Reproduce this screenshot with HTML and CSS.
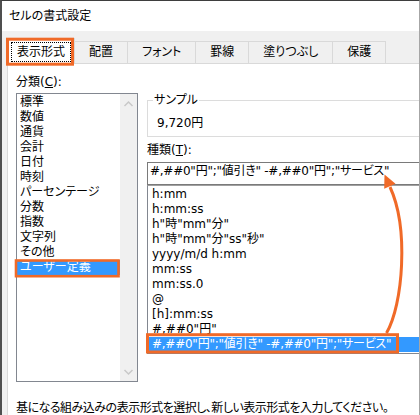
FILE: index.html
```html
<!DOCTYPE html>
<html lang="ja">
<head>
<meta charset="utf-8">
<link rel="stylesheet" href="styles.css">
</head>
<body>
<div class="window">
  <div class="titlebar">セルの書式設定</div>
  <div class="tabs">
    <div class="tab active"><span class="focus">表示形式</span></div>
    <div class="tab">配置</div>
    <div class="tab">フォント</div>
    <div class="tab">罫線</div>
    <div class="tab">塗りつぶし</div>
    <div class="tab">保護</div>
  </div>
  <div class="content">
    <div class="panel">
      <div class="row">
        <div class="leftcol">
          <div class="label">分類(<u>C</u>):</div>
          <div class="catbox">
            <div class="catitems">
              <div class="item">標準</div>
              <div class="item">数値</div>
              <div class="item">通貨</div>
              <div class="item">会計</div>
              <div class="item">日付</div>
              <div class="item">時刻</div>
              <div class="item">パーセンテージ</div>
              <div class="item">分数</div>
              <div class="item">指数</div>
              <div class="item">文字列</div>
              <div class="item">その他</div>
              <div class="item selected">ユーザー定義</div>
            </div>
            <div class="scrollbar">
              <svg class="sbtn" width="17" height="17" viewBox="0 0 17 17"><path d="M4.5 12 L8.5 8 L12.5 12" fill="none" stroke="#c8c8c8" stroke-width="1.5"/></svg>
              <svg class="sbtn" width="17" height="17" viewBox="0 0 17 17"><path d="M4.5 6 L8.5 10 L12.5 6" fill="none" stroke="#c8c8c8" stroke-width="1.5"/></svg>
            </div>
          </div>
        </div>
        <div class="rightcol">
          <fieldset class="sample">
            <legend>サンプル</legend>
            <div class="sampleval">9,720円</div>
          </fieldset>
          <div class="label typelabel">種類(<u>T</u>):</div>
          <div class="textbox long">#,##0"円";"値引き" -#,##0"円";"サービス"</div>
          <div class="fmtbox">
            <div class="fitem">h:mm</div>
            <div class="fitem">h:mm:ss</div>
            <div class="fitem">h"時"mm"分"</div>
            <div class="fitem">h"時"mm"分"ss"秒"</div>
            <div class="fitem">yyyy/m/d h:mm</div>
            <div class="fitem">mm:ss</div>
            <div class="fitem">mm:ss.0</div>
            <div class="fitem">@</div>
            <div class="fitem">[h]:mm:ss</div>
            <div class="fitem">#,##0"円"</div>
            <div class="fitem selected long">#,##0"円";"値引き" -#,##0"円";"サービス"</div>
          </div>
        </div>
      </div>
      <div class="hint">基になる組み込みの表示形式を選択し、新しい表示形式を入力してください。</div>
    </div>
  </div>
  <svg class="overlay" width="420" height="415" viewBox="0 0 420 415">
    <rect x="7.5" y="39.2" width="65" height="25" fill="none" stroke="#f06a28" stroke-width="3"/>
    <rect x="16" y="260.5" width="102.5" height="15.7" fill="none" stroke="#f06a28" stroke-width="2.6"/>
    <rect x="147.5" y="334.7" width="250" height="17.3" fill="none" stroke="#f06a28" stroke-width="3"/>
    <path d="M386.5 333 C403 305 409 228 390 187" fill="none" stroke="#f06a28" stroke-width="3"/>
    <polygon points="384.5,174.5 395.5,183.8 384.2,188.8" fill="#f06a28"/>
  </svg>
</div>
</body>
</html>
```
FILE: styles.css
```css
html, body {
  margin: 0;
  padding: 0;
}
body {
  font-family: "DejaVu Sans", "Noto Sans CJK JP", sans-serif;
  font-size: 12px;
  line-height: 15px;
  color: #000;
  font-feature-settings: "palt";
  background: #fff;
}
.window {
  position: relative;
  width: 420px;
  height: 415px;
  box-sizing: border-box;
  border-top: 1px solid #3e3e3e;
  border-left: 2px solid #4f4f4f;
  border-right: 1px solid #a6a6a6;
  background: #f0f0f0;
  overflow: hidden;
}
.titlebar {
  height: 30px;
  line-height: 30px;
  background: #fff;
  padding-left: 7px;
}
.tabs {
  display: flex;
  align-items: flex-end;
  height: 32px;
  padding-left: 5px;
}
.tab {
  height: 22px;
  box-sizing: border-box;
  border: 1px solid #d9d9d9;
  border-bottom: none;
  background: #f0f0f0;
  padding: 0 14px;
  line-height: 21px;
  margin-right: -1px;
}
.tab.active {
  position: relative;
  z-index: 1;
  height: 26px;
  margin-bottom: -1px;
  background: #fff;
  padding: 3px 3px 0 3px;
  line-height: 18px;
}
.focus {
  display: block;
  border: 1px dotted #000;
  padding: 0 5px 0 5px;
  height: 18px;
}
.content {
  padding-left: 5px;
}
.panel {
  background: #fff;
  border: 1px solid #d9d9d9;
  border-right: none;
  height: 400px;
  padding: 11px 0 0 8px;
}
.row {
  display: flex;
  gap: 9px;
}
.leftcol {
  width: 122px;
  flex: none;
}
.catbox {
  margin-top: 3px;
  height: 289px;
  box-sizing: border-box;
  border: 1px solid #828790;
  display: flex;
}
.catitems {
  flex: 1;
  padding-top: 1px;
}
.item {
  padding-left: 3px;
  height: 15px;
  white-space: nowrap;
}
.item.selected, .fitem.selected {
  background: #3399ff;
  color: #fff;
}
.scrollbar {
  width: 17px;
  background: #f0f0f0;
  display: flex;
  flex-direction: column;
  justify-content: space-between;
}
.sbtn {
  display: block;
}
.rightcol {
  width: 300px;
  flex: none;
}
.sample {
  margin: 18px 0 0 0;
  padding: 8px 0 5px 5px;
  border: 1px solid #dcdcdc;
  border-right: none;
  min-width: 0;
}
.sample legend {
  padding: 0 1px;
  margin: 0;
}
.sampleval {
  margin-left: 4px;
}
.typelabel {
  margin-top: 6px;
}
.textbox {
  margin-top: 4px;
  height: 23px;
  box-sizing: border-box;
  border: 1px solid #7a7a7a;
  border-right: none;
  padding: 1px 0 0 2px;
  white-space: nowrap;
}
.fmtbox {
  height: 169px;
  box-sizing: border-box;
  border: 1px solid #828790;
  border-top-color: #a0a0a0;
  border-right: none;
  padding-top: 1px;
}
.fitem {
  height: 15px;
  padding-left: 4px;
  white-space: nowrap;
}
.long {
  letter-spacing: -0.25px;
}
.hint {
  margin-top: 19px;
  white-space: nowrap;
  letter-spacing: -0.5px;
}
.overlay {
  position: absolute;
  left: -2px;
  top: -1px;
  z-index: 5;
  pointer-events: none;
}
```
